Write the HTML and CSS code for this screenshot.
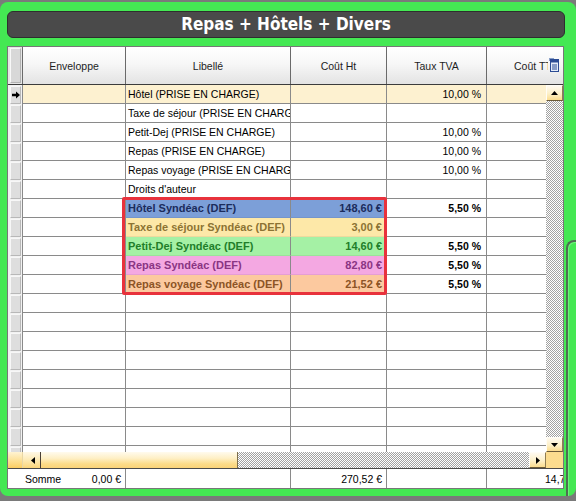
FILE: index.html
```html
<!DOCTYPE html>
<html lang="fr">
<head>
<meta charset="utf-8">
<title>Repas + Hôtels + Divers</title>
<link rel="stylesheet" href="styles.css">
</head>
<body>
<div class="panel">
  <div class="title">Repas + Hôtels + Divers</div>
  <div class="grid">
    <div class="cols hd">
      <div class="hc hsel"><span class="hbox"></span></div>
      <div class="hc">Enveloppe</div>
      <div class="hc">Libellé</div>
      <div class="hc">Coût Ht</div>
      <div class="hc">Taux TVA</div>
      <div class="hc hlast"><span class="clip">Coût TTC</span><svg class="colicon" width="10" height="14" viewBox="0 0 10 14"><rect x="0" y="0" width="5" height="3" fill="#8aa0c8"/><rect x="1.5" y="1.5" width="8" height="12" fill="#e4ecf8" stroke="#2c4c94"/><rect x="1.5" y="1.5" width="8" height="3" fill="#2c4c94"/><line x1="3" y1="7" x2="8" y2="7" stroke="#2c4c94"/><line x1="3" y1="9" x2="8" y2="9" stroke="#2c4c94"/><line x1="3" y1="11" x2="8" y2="11" stroke="#2c4c94"/></svg></div>
    </div>
    <div class="body">
      <div class="cols row cur">
        <div class="c sel"><span class="selbox"><svg width="9" height="8" viewBox="0 0 9 8"><path d="M0 2.5H4.5V0L9 4L4.5 8V5.5H0Z" fill="#000"/></svg></span></div>
        <div class="c"></div>
        <div class="c lib">Hôtel (PRISE EN CHARGE)</div>
        <div class="c"></div>
        <div class="c num tva">10,00 %</div>
        <div class="c"></div>
      </div>
      <div class="cols row">
        <div class="c sel"><span class="selbox"></span></div>
        <div class="c"></div>
        <div class="c lib">Taxe de séjour (PRISE EN CHARGE)</div>
        <div class="c"></div>
        <div class="c num tva"></div>
        <div class="c"></div>
      </div>
      <div class="cols row">
        <div class="c sel"><span class="selbox"></span></div>
        <div class="c"></div>
        <div class="c lib">Petit-Dej (PRISE EN CHARGE)</div>
        <div class="c"></div>
        <div class="c num tva">10,00 %</div>
        <div class="c"></div>
      </div>
      <div class="cols row">
        <div class="c sel"><span class="selbox"></span></div>
        <div class="c"></div>
        <div class="c lib">Repas (PRISE EN CHARGE)</div>
        <div class="c"></div>
        <div class="c num tva">10,00 %</div>
        <div class="c"></div>
      </div>
      <div class="cols row">
        <div class="c sel"><span class="selbox"></span></div>
        <div class="c"></div>
        <div class="c lib">Repas voyage (PRISE EN CHARGE)</div>
        <div class="c"></div>
        <div class="c num tva">10,00 %</div>
        <div class="c"></div>
      </div>
      <div class="cols row">
        <div class="c sel"><span class="selbox"></span></div>
        <div class="c"></div>
        <div class="c lib">Droits d'auteur</div>
        <div class="c"></div>
        <div class="c num tva"></div>
        <div class="c"></div>
      </div>
      <div class="cols row">
        <div class="c sel"><span class="selbox"></span></div>
        <div class="c"></div>
        <div class="c lib hl blue">Hôtel Syndéac (DEF)</div>
        <div class="c num ht hl blue">148,60 €</div>
        <div class="c num tva b">5,50 %</div>
        <div class="c"></div>
      </div>
      <div class="cols row">
        <div class="c sel"><span class="selbox"></span></div>
        <div class="c"></div>
        <div class="c lib hl yellow">Taxe de séjour Syndéac (DEF)</div>
        <div class="c num ht hl yellow">3,00 €</div>
        <div class="c num tva b"></div>
        <div class="c"></div>
      </div>
      <div class="cols row">
        <div class="c sel"><span class="selbox"></span></div>
        <div class="c"></div>
        <div class="c lib hl green">Petit-Dej Syndéac (DEF)</div>
        <div class="c num ht hl green">14,60 €</div>
        <div class="c num tva b">5,50 %</div>
        <div class="c"></div>
      </div>
      <div class="cols row">
        <div class="c sel"><span class="selbox"></span></div>
        <div class="c"></div>
        <div class="c lib hl pink">Repas Syndéac (DEF)</div>
        <div class="c num ht hl pink">82,80 €</div>
        <div class="c num tva b">5,50 %</div>
        <div class="c"></div>
      </div>
      <div class="cols row">
        <div class="c sel"><span class="selbox"></span></div>
        <div class="c"></div>
        <div class="c lib hl peach">Repas voyage Syndéac (DEF)</div>
        <div class="c num ht hl peach">21,52 €</div>
        <div class="c num tva b">5,50 %</div>
        <div class="c"></div>
      </div>
      <div class="cols row"><div class="c sel"><span class="selbox"></span></div><div class="c"></div><div class="c"></div><div class="c"></div><div class="c"></div><div class="c"></div></div>
      <div class="cols row"><div class="c sel"><span class="selbox"></span></div><div class="c"></div><div class="c"></div><div class="c"></div><div class="c"></div><div class="c"></div></div>
      <div class="cols row"><div class="c sel"><span class="selbox"></span></div><div class="c"></div><div class="c"></div><div class="c"></div><div class="c"></div><div class="c"></div></div>
      <div class="cols row"><div class="c sel"><span class="selbox"></span></div><div class="c"></div><div class="c"></div><div class="c"></div><div class="c"></div><div class="c"></div></div>
      <div class="cols row"><div class="c sel"><span class="selbox"></span></div><div class="c"></div><div class="c"></div><div class="c"></div><div class="c"></div><div class="c"></div></div>
      <div class="cols row"><div class="c sel"><span class="selbox"></span></div><div class="c"></div><div class="c"></div><div class="c"></div><div class="c"></div><div class="c"></div></div>
      <div class="cols row"><div class="c sel"><span class="selbox"></span></div><div class="c"></div><div class="c"></div><div class="c"></div><div class="c"></div><div class="c"></div></div>
      <div class="cols row"><div class="c sel"><span class="selbox"></span></div><div class="c"></div><div class="c"></div><div class="c"></div><div class="c"></div><div class="c"></div></div>
      <div class="cols row"><div class="c sel"><span class="selbox"></span></div><div class="c"></div><div class="c"></div><div class="c"></div><div class="c"></div><div class="c"></div></div>

      <div class="redbox"></div>

      <div class="vs">
        <div class="sbtn up"><svg width="7" height="4" viewBox="0 0 7 4"><path d="M0 4L3.5 0L7 4Z" fill="#000"/></svg></div>
        <div class="vtrack"></div>
        <div class="sbtn dn"><svg width="7" height="4" viewBox="0 0 7 4"><path d="M0 0L3.5 4L7 0Z" fill="#000"/></svg></div>
      </div>
    </div>

    <div class="hs">
      <div class="hsel"></div>
      <div class="sbtn left"><svg width="4" height="7" viewBox="0 0 4 7"><path d="M4 0L0 3.5L4 7Z" fill="#000"/></svg></div>
      <div class="thumb"></div>
      <div class="htrack"></div>
      <div class="sbtn right"><svg width="4" height="7" viewBox="0 0 4 7"><path d="M0 0L4 3.5L0 7Z" fill="#000"/></svg></div>
      <div class="corner"></div>
    </div>

    <div class="cols ft">
      <div class="fc fsum"><span>Somme</span><span>0,00 €</span></div>
      <div class="fc"></div>
      <div class="fc fnum">270,52 €</div>
      <div class="fc"></div>
      <div class="fc flast">14,72 €</div>
    </div>
  </div>
  <div class="edge"></div>
</div>
</body>
</html>
```

FILE: styles.css
```css
html, body {
  margin: 0;
  padding: 0;
}
body {
  width: 576px;
  height: 501px;
  overflow: hidden;
  background: #7a7a7a;
  font-family: "Liberation Sans", Arial, sans-serif;
  color: #000;
}
.panel {
  position: relative;
  margin-top: 2px;
  height: 494px;
  box-sizing: border-box;
  padding: 9px 0 0 7px;
  background: #44e853;
  border-radius: 8px;
  overflow: hidden;
}
.title {
  width: 558px;
  height: 27px;
  box-sizing: border-box;
  margin-bottom: 8px;
  background: #4a4a4a;
  border: 1px solid #2e2e2e;
  border-radius: 6px;
  color: #fff;
  font-family: "DejaVu Sans Condensed", "DejaVu Sans", sans-serif;
  font-stretch: condensed;
  font-weight: bold;
  font-size: 17px;
  display: flex;
  align-items: center;
  justify-content: center;
  padding-bottom: 1px;
}
.grid {
  position: relative;
  z-index: 1;
  width: 557px;
  box-sizing: border-box;
  border: 1px solid #777;
  background: #fff;
  overflow: hidden;
}
.cols {
  display: grid;
  grid-template-columns: 15px 103px 165px 96px 100px 76px;
}

/* header */
.hd {
  height: 38px;
  box-sizing: border-box;
  border-bottom: 1px solid #3c3c3c;
}
.hc {
  box-sizing: border-box;
  border-right: 1px solid #6a6a6a;
  background: linear-gradient(#ffffff 0%, #f7f7f7 45%, #e3e3e3 100%);
  display: flex;
  align-items: center;
  justify-content: center;
  font-size: 10.5px;
  color: #1e1e1e;
  white-space: nowrap;
  overflow: hidden;
}
.hc.hsel {
  background: #e6e6e6;
  padding: 1px 0 1px 2px;
  align-items: stretch;
  justify-content: flex-start;
}
.hbox {
  width: 11px;
  box-sizing: border-box;
  background: #d8d8d8;
  border: 1px solid;
  border-color: #f8f8f8 #b2b2b2 #b2b2b2 #f8f8f8;
}
.hc.hlast {
  border-right: none;
  justify-content: flex-start;
  padding-left: 27px;
}
.clip {
  display: block;
  width: 34px;
  overflow: hidden;
}
.colicon {
  display: block;
  margin-left: 1px;
  margin-top: -1px;
}

/* body */
.body {
  position: relative;
  height: 367px;
  overflow: hidden;
}
.row {
  height: 19px;
}
.c {
  box-sizing: border-box;
  border-right: 1px solid #8a8a8a;
  border-bottom: 1px solid #8a8a8a;
  display: flex;
  align-items: center;
  white-space: nowrap;
  overflow: hidden;
  font-size: 10.5px;
}
.c.sel {
  border-bottom: none;
  background: #f2f2f2;
  padding: 1px 0 0 2px;
  align-items: stretch;
}
.selbox {
  width: 11px;
  box-sizing: border-box;
  background: #dedede;
  border: 1px solid;
  border-color: #f7f7f7 #b8b8b8 #b8b8b8 #f7f7f7;
  display: flex;
  align-items: center;
  justify-content: center;
}
.selbox svg {
  display: block;
  margin-left: 1px;
}
.row.cur .c:not(.sel) {
  background: #fdf1d0;
}
.lib {
  padding-left: 2px;
}
.num {
  justify-content: flex-end;
}
.ht {
  padding-right: 4px;
}
.tva {
  padding-right: 5px;
}
.b {
  font-weight: bold;
}
.hl {
  font-weight: bold;
  font-size: 11px;
  border-bottom-color: rgba(0, 0, 0, 0.06);
}
.blue   { background: #7c9fd8; color: #1b2c5c; }
.yellow { background: #fde8a8; color: #8c7333; }
.green  { background: #a5f1a5; color: #217e2a; }
.pink   { background: #f4a8e2; color: #8a3583; }
.peach  { background: #fcc99f; color: #8c5426; }

.redbox {
  position: absolute;
  left: 114px;
  top: 112px;
  width: 265px;
  height: 98px;
  box-sizing: border-box;
  border: 3px solid #e8323c;
  border-radius: 2px;
}

/* scrollbars */
.vs, .htrack {
  background-color: #fff;
  background-image: repeating-conic-gradient(#a2a2a2 0% 25%, #ffffff 0% 50%);
  background-size: 2px 2px;
}
.vs {
  position: absolute;
  right: 0;
  top: 0;
  width: 17px;
  height: 367px;
  display: flex;
  flex-direction: column;
}
.vtrack {
  flex: 1;
}
.sbtn {
  box-sizing: border-box;
  display: flex;
  align-items: center;
  justify-content: center;
  background: linear-gradient(#fffaf0 0%, #fdf0c8 55%, #fbdc8e 100%);
  border: 1px solid;
  border-color: #fffdf6 #8f7d52 #6b5a38 #fffdf6;
}
.sbtn svg {
  display: block;
}
.up {
  height: 16px;
}
.dn {
  height: 15px;
}
.hs {
  display: flex;
  height: 17px;
  box-sizing: border-box;
  border-bottom: 1px solid #4a4a4a;
}
.hs .hsel {
  width: 15px;
  background: linear-gradient(#fff3d2 0%, #fde29a 50%, #fbcd62 100%);
  border-right: 1px solid #e9d7a6;
  box-sizing: border-box;
}
.hs .left {
  width: 18px;
  border: none;
  border-right: 1px solid #4a4036;
  padding-left: 2px;
  background: linear-gradient(#fff8e6 0%, #fdeab4 50%, #fbd67a 100%);
}
.thumb {
  width: 197px;
  box-sizing: border-box;
  background: linear-gradient(#fffbee 0%, #feefc4 40%, #fcdb88 75%, #fbd479 100%);
  border-right: 1px solid #7f704c;
}
.htrack {
  flex: 1;
}
.hs .right {
  width: 17px;
}
.corner {
  width: 17px;
  background: #fcdc8e;
}

/* footer */
.ft {
  height: 19px;
}
.fc {
  box-sizing: border-box;
  border-right: 1px solid #8a8a8a;
  display: flex;
  align-items: center;
  white-space: nowrap;
  overflow: hidden;
  font-size: 10.5px;
}
.fsum {
  grid-column: span 2;
  justify-content: space-between;
  padding: 0 4px 0 17px;
}
.fnum {
  justify-content: flex-end;
  padding-right: 4px;
}
.flast {
  border-right: none;
  padding-left: 58px;
}

/* partial edge of a neighbouring frame on the right */
.edge {
  position: absolute;
  left: 566px;
  top: 238px;
  width: 30px;
  height: 300px;
  border-left: 2px solid #4f6e52;
  border-top: 2px solid #4f6e52;
  border-top-left-radius: 8px;
  box-shadow: inset 1px 1px 0 #6df27a;
}
```
